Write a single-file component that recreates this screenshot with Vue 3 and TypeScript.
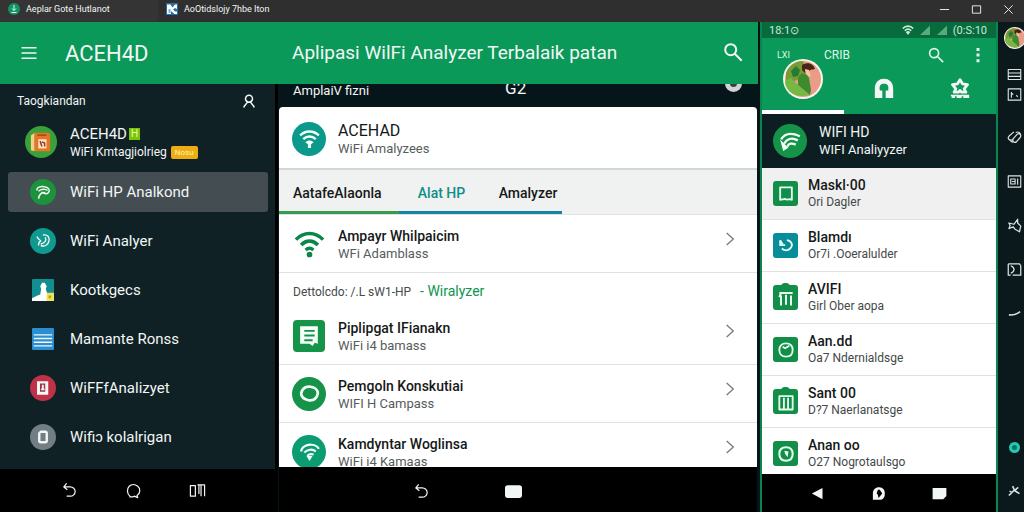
<script setup lang="ts">
import { h, ref } from 'vue'

interface Shape {
  d: string
  fill?: string
  stroke?: string
  width?: number
}

const line = (d: string, width = 2, stroke = 'currentColor'): Shape => ({ d, width, stroke })
const solid = (d: string, fill = 'currentColor'): Shape => ({ d, fill })

const shapes: Record<string, Shape[]> = {
  menu: [line('M2 5h20M2 12h20M2 19h20', 2)],
  search: [line('M15.500 9.500a6 6 0 1 1-12 0a6 6 0 0 1 12 0zM14 14l7.500 7.500', 2.200)],
  dots: [solid('M10 2.500h4v4h-4zM10 10h4v4h-4zM10 17.500h4v4h-4z')],
  person: [line('M18 8a6 6 0 1 1-12 0a6 6 0 0 1 12 0zM3 23c1-3 4-5 6-8.500M21 23c-1-3-4-5-6-8.500', 2.600)],
  chevron: [line('M7 3l10 9-10 9', 2)],
  wifi: [
    line('M1.500 9c6-6.300 15-6.300 21 0', 2.800),
    line('M5.500 13.200c4-4 9-4 13 0', 2.800),
    line('M9 17c2-1.800 4-1.800 6 0', 2.600),
    solid('M14.200 20.500a2.200 2.200 0 1 1-4.400 0a2.200 2.200 0 0 1 4.400 0z'),
  ],
  wifiStatus: [
    line('M1.500 9c6-6.300 15-6.300 21 0', 3.200),
    line('M5.500 13.500c4-4 9-4 13 0', 3.200),
    solid('M7.500 16c3-2.500 6-2.500 9 0L12 22z'),
  ],
  wifiBadge: [
    line('M3 9c5-5 13-5 18 0', 2.300),
    line('M6 12.500c3.500-3.200 8.500-3.200 12 0', 2.300),
    solid('M8 15.500c2.500-2 5.500-2 8 0l-2.500 2V21h-3v-3.500z'),
  ],
  wifiSwirl: [
    line('M4 10c-1-4 5-6 10-5c6 1 8 5 5 8c-2 2-6 1-9-1', 1.900),
    line('M6 11c3-3 9-4 12-1M15 13c-5-1-8 3-9 8', 2),
  ],
  wifiRound: [
    line('M4 12c0-4 5-7 10-6.500c4 .3 6 2 7 4', 2),
    line('M7 13c3-3 8-4 11-1M10 16c2-2 4-2 6-1', 2),
    solid('M9 16h6l-3 5z'),
  ],
  wifiLeaf: [
    line('M3 10c3-5 9-7 18-3M6 14c3-5 8-6 13-3M9 17c1-3 4-4 8-2', 2.200),
    solid('M2 10l3 11 5-3-3-3z'),
  ],
  swirl: [line('M12 4c6-1 9 3 8 8c-1 5-6 8-11 6M4 6c1 4 3 3 5 6c-3 1-3 4-3 6M15 7c2 4 0 8-6 9', 1.800)],
  photo: [
    solid('M0 24v-3l6-3 3-1 1-6-1-3 2-4h3l2 4-1 3 2 6 7 3v4z', '#ffffff'),
    solid('M16 15h8v9h-8z', '#efe25a'),
    solid('M18 18h3v3h-3z', '#b4a62d'),
  ],
  rows: [line('M2 7.500h20M2 11.500h20M2 15.500h20M2 19.500h20', 1.600)],
  book: [
    solid('M1 5l4-3v20l-4-1z', '#f6cf8c'),
    solid('M5 2h15l2 2v18H5z', '#e87524'),
    line('M8 4.500h10', 1.500, '#8d4c20'),
    solid('M9 9h9v10H9z', '#ffe3c9'),
    line('M11 11l2 6M13 12l3 1v4', 1.700, '#983e25'),
  ],
  card: [solid('M4 3h15v18H4z'), solid('M8 6h7v11H8z', '#9d3442'), solid('M10.500 7.500h2.500v5h1v2.500h-4.500v-2.500h1z')],
  zero: [line('M9 5h6a2 2 0 0 1 2 2V17a2 2 0 0 1-2 2H9a2 2 0 0 1-2-2V7z', 3.200)],
  doc: [solid('M3 3h17v17l-3-1-2 3-3-2H3z'), line('M7 7.500h10M7 12h10M7 16.500h8', 1.800, '#15914a')],
  ring: [line('M4 12c1-5 4-7 9-6.500c4 .5 7 3 7 6.500c-1 5-4 7-9 6.500c-4-1-7-3-7-6.500z', 2.600)],
  bookmark: [line('M5 4h14v15c-3-2-5 1-8-1c-2 0-4 1-6 1z', 2.200)],
  refresh: [line('M5 5v6h6M13 5c6 1 8 6 4 10c-3 3-7 3-10 0M8 10l-3-5', 2.200)],
  bin: [line('M4 6h16M6 9v12M12 8v12M18 9v12M6 6l-2 5', 2.400)],
  columns: [line('M4 5h16v16H4zM9.500 7v13M14.500 7v13', 2.200)],
  face: [line('M12 4c6 0 8 3 8 8s-3 8-8 8s-8-3-8-8s3-8 8-8zM8 8l3 2 5-3', 2.200)],
  compass: [line('M12 4c6 0 8 3 8 8s-3 8-8 8s-8-3-8-8s3-8 8-8z', 2.400), solid('M10 8l5 1-1 7-3-4z')],
  headphones: [solid('M1 24V13C1 5 6 1 12 1s11 4 11 12v11h-9v-9h3c1-6-1-8-5-8s-6 2-5 8h3v9z')],
  star: [
    line('M12 2l3 5 6 1-4 5 2 4h-5l-2-2-2 2H5l2-4-4-5 6-1z', 3.400),
    line('M1 21h22M2 23h4M8 23h6M16 23h7', 2),
  ],
  back: [line('M8 2L4 7l5 4M4 7h9a7 6.500 0 0 1 0 13H8', 1.700)],
  home: [line('M7 21h4l2-1 5 2-1-3c5-3 5-10 1-13s-9-3-12 0s-4 10 1 14z', 1.700)],
  recents: [line('M2 5h7v15H2zM12 4h5v16M14 4v13M17 4h5v16', 1.700)],
  tablet: [solid('M4 3h16a4 4 0 0 1 4 4v10a4 4 0 0 1-4 4H4a4 4 0 0 1-4-4V7a4 4 0 0 1 4-4z')],
  triangle: [solid('M20 3v18L3 12z')],
  drop: [solid('M3 22V12C3 6 7 2 13 2s10 5 9 11c0 5-3 9-8 9z'), solid('M11 6h3l4 6-6 7-1-5-2-2z', '#000000')],
  stop: [solid('M1 3h22v13l-5 5H1z')],
  minimize: [line('M2 12h20', 2)],
  maximize: [line('M3 4h18v16H3z', 2)],
  close: [line('M3 3l18 18M21 3L3 21', 2)],
  globe: [line('M12 4v11M8 11l4 4 4-4M7 19h10', 2, '#d5fff0')],
  news: [solid('M2 3h7l4 6 5-6h4v9l-4-2-4 3 4 4h4v5h-5l-7-6v6H2z', '#ffffff'), solid('M5 12h4v8H5z', '#5bb7ec')],
  signal: [solid('M22 3v19H2z', '#57ac7a')],
  stack: [line('M2 4h20v16H2zM2 9.500h20M2 15h20', 1.800)],
  image: [line('M2 3h20v18H2zM7 8v9M7 10l3 2M15 13l2 3', 1.800)],
  link: [line('M11 3L3 10c-3 4 2 8 6 5l7-8c4-3 8 1 5 5l-6 7c-4 2-7-1-5-5M14 4c4-2 8 0 8 5M3 15l6 5', 1.900)],
  panel: [line('M2 3h20v18H2zM6 8h7v8H6zM8 12h4M17 7v10', 1.800)],
  pin: [line('M3 8l8 2 6-8v6l5 5-2 9-7-4-3-4-7 3 2-5z', 2)],
  door: [line('M2 3h18l2 3v15H9M2 3v18h4M6 6c7 3 7 9 0 12', 2)],
  dash: [line('M3 14c7 1 13-1 18-5', 2.400)],
  spark: [line('M3 20l8-8M9 5l3 7 8 5M12 12l6-5M4 13l4 2', 2.600)],
}

const Glyph = (props: { name: string }) =>
  h(
    'svg',
    { viewBox: '0 0 24 24', class: 'glyph', 'aria-hidden': 'true' },
    shapes[props.name].map((s) =>
      h('path', {
        d: s.d,
        fill: s.fill ?? 'none',
        stroke: s.stroke ?? 'none',
        'stroke-width': s.width ?? 0,
        'stroke-linejoin': 'round',
      }),
    ),
  )
Glyph.props = ['name']

const Avatar = () =>
  h('svg', { viewBox: '0 0 40 40', class: 'avatar', 'aria-hidden': 'true' }, [
    h('circle', { cx: 20, cy: 20, r: 20, fill: '#f6f6ee' }),
    h('circle', { cx: 20, cy: 20, r: 18, fill: '#eb9c86' }),
    h('path', { d: 'M3 14A18 18 0 0 1 20 2l4 10-8 8L3 26z', fill: '#7a9a35' }),
    h('path', { d: 'M19 6c6-4 12-1 13 4l-5 1-3 5-5-5z', fill: '#472519' }),
    h('path', { d: 'M22 10l4 1 2 6-5 1z', fill: '#f4c6a0' }),
    h('path', { d: 'M8 12l5-5 4 4-2 6-5 1z', fill: '#247b36' }),
    h('path', { d: 'M2 22l6-3 9 9 10 8C12 40 2 32 2 22z', fill: '#74b942' }),
    h('path', { d: 'M15 20c1-6 8-8 11-1l2 12-1 5-12-10z', fill: '#3d8b2f' }),
  ])

const menuItems = [
  { label: 'WiFi HP Analkond', icon: 'wifiSwirl', tone: 'leaf' },
  { label: 'WiFi Analyer', icon: 'swirl', tone: 'aqua' },
  { label: 'Kootkgecs', icon: 'photo', tone: 'square sea' },
  { label: 'Mamante Ronss', icon: 'rows', tone: 'square sky' },
  { label: 'WiFFfAnalizyet', icon: 'card', tone: 'rose' },
  { label: 'Wifi\u0254 kolalrigan', icon: 'zero', tone: 'slate' },
]
const activeItem = ref(0)

const tabs = ['AatafeAlaonla', 'Alat HP', 'Amalyzer']
const activeTab = ref(1)

const tools = [
  { title: 'Piplipgat IFianakn', sub: 'WiFi i4 bamass', icon: 'doc', tone: 'box' },
  { title: 'Pemgoln Konskutiai', sub: 'WIFI H Campass', icon: 'ring', tone: 'disc' },
  { title: 'Kamdyntar Woglinsa', sub: 'WiFi i4 Kamaas', icon: 'wifiRound', tone: 'disc mint' },
]

const networks = [
  { title: 'Maskl\u00b700', sub: 'Ori Dagler', icon: 'bookmark', tone: '' },
  { title: 'Blamd\u0131', sub: 'Or7i .Ooeralulder', icon: 'refresh', tone: 'cyan' },
  { title: 'AVIFI', sub: 'Girl Ober aopa', icon: 'bin', tone: 'handle' },
  { title: 'Aan.dd', sub: 'Oa7 Ndernialdsge', icon: 'face', tone: '' },
  { title: 'Sant 00', sub: 'D?7 Naerlanatsge', icon: 'columns', tone: 'handle' },
  { title: 'Anan oo', sub: 'O27 Nogrotaulsgo', icon: 'compass', tone: '' },
]

const railTop = ['stack', 'image']
const railMain = ['link', 'panel', 'pin', 'door', 'dash']
</script>

<template>
  <div class="desktop">
    <header class="titlebar">
      <div class="window-tab first"><span class="tab-icon round"><Glyph name="globe" /></span>Aeplar Gote Hutlanot</div>
      <div class="window-tab second"><span class="tab-icon"><Glyph name="news" /></span>AoOtidslojy 7hbe Iton</div>
      <div class="window-actions">
        <button aria-label="Minimize"><Glyph name="minimize" /></button>
        <button aria-label="Maximize"><Glyph name="maximize" /></button>
        <button aria-label="Close"><Glyph name="close" /></button>
      </div>
    </header>

    <div class="stage">
      <section class="workspace">
        <header class="appbar">
          <div class="brand">
            <button aria-label="Menu"><Glyph name="menu" /></button>
            <h1>ACEH4D</h1>
          </div>
          <div class="heading">
            <h2>Aplipasi WilFi Analyzer Terbalaik patan</h2>
            <button aria-label="Search"><Glyph name="search" /></button>
          </div>
        </header>

        <div class="columns">
          <aside class="sidebar">
            <div class="drawer">
              <div class="drawer-head">
                <span>Taogkiandan</span>
                <button aria-label="Account"><Glyph name="person" /></button>
              </div>
              <div class="profile">
                <span class="profile-icon"><Glyph name="book" /></span>
                <div class="profile-text">
                  <div class="profile-name">ACEH4D<span class="chip">H</span></div>
                  <div class="profile-sub">WiFi Kmtagjiolrieg<span class="tag">Nosu</span></div>
                </div>
              </div>
              <nav class="menu">
                <button
                  v-for="(item, i) in menuItems"
                  :key="item.label"
                  :class="{ active: i === activeItem }"
                  @click="activeItem = i"
                >
                  <span class="menu-icon" :class="item.tone"><Glyph :name="item.icon" /></span>{{ item.label }}
                </button>
              </nav>
            </div>
            <div class="softkeys">
              <button aria-label="Back"><Glyph name="back" /></button>
              <button aria-label="Home"><Glyph name="home" /></button>
              <button aria-label="Recents"><Glyph name="recents" /></button>
            </div>
          </aside>

          <main class="content">
            <div class="peek">
              <span>AmplaiV fizni</span>
              <span class="peek-mid">G2</span>
              <span class="peek-dot"></span>
            </div>
            <div class="sheet">
              <div class="card">
                <span class="tool-icon disc teal"><Glyph name="wifiBadge" /></span>
                <div class="row-text">
                  <div class="card-title">ACEHAD</div>
                  <div class="row-sub">WiFi Amalyzees</div>
                </div>
              </div>
              <div class="tabs" role="tablist">
                <button
                  v-for="(tab, i) in tabs"
                  :key="tab"
                  role="tab"
                  :aria-selected="i === activeTab"
                  @click="activeTab = i"
                >
                  {{ tab }}
                </button>
              </div>
              <button class="row">
                <span class="tool-icon plain"><Glyph name="wifi" /></span>
                <span class="row-text">
                  <span class="row-title">Ampayr Whilpaicim</span>
                  <span class="row-sub">WFi Adamblass</span>
                </span>
                <span class="chev"><Glyph name="chevron" /></span>
              </button>
              <p class="subhead">Dettolcdo: /.L sW1-HP <a href="#">- Wiralyzer</a></p>
              <button v-for="tool in tools" :key="tool.title" class="row">
                <span class="tool-icon" :class="tool.tone"><Glyph :name="tool.icon" /></span>
                <span class="row-text">
                  <span class="row-title">{{ tool.title }}</span>
                  <span class="row-sub">{{ tool.sub }}</span>
                </span>
                <span class="chev"><Glyph name="chevron" /></span>
              </button>
            </div>
            <div class="softkeys wide">
              <button aria-label="Back"><Glyph name="back" /></button>
              <button aria-label="Home"><Glyph name="tablet" /></button>
            </div>
          </main>
        </div>
      </section>

      <section class="phone">
        <div class="status">
          <span>18:1&#8857;</span>
          <span class="status-right">
            <Glyph name="wifiStatus" /><Glyph name="signal" /><Glyph name="signal" /><span>(0:S:10</span>
          </span>
        </div>
        <div class="phone-bar">
          <span class="phone-small">LXI</span>
          <span class="phone-name">CRIB</span>
          <button aria-label="Search"><Glyph name="search" /></button>
          <button aria-label="More"><Glyph name="dots" /></button>
        </div>
        <div class="phone-tabs">
          <button class="current" aria-label="Profile"><Avatar /></button>
          <button aria-label="Audio"><Glyph name="headphones" /></button>
          <button aria-label="Favourites"><Glyph name="star" /></button>
        </div>
        <div class="phone-hero">
          <span class="tool-icon disc"><Glyph name="wifiLeaf" /></span>
          <div>
            <div class="hero-title">WIFI HD</div>
            <div class="hero-sub">WIFI Analiyyzer</div>
          </div>
        </div>
        <ul class="networks">
          <li v-for="(net, i) in networks" :key="net.title" :class="{ shaded: i === 0 }">
            <span class="net-icon" :class="net.tone"><Glyph :name="net.icon" /></span>
            <div>
              <div class="net-title">{{ net.title }}</div>
              <div class="net-sub">{{ net.sub }}</div>
            </div>
          </li>
        </ul>
        <div class="softkeys compact">
          <button aria-label="Back"><Glyph name="triangle" /></button>
          <button aria-label="Home"><Glyph name="drop" /></button>
          <button aria-label="Recents"><Glyph name="stop" /></button>
        </div>
      </section>

      <aside class="rail">
        <Avatar />
        <div class="rail-top">
          <button v-for="name in railTop" :key="name" :aria-label="name"><Glyph :name="name" /></button>
        </div>
        <div class="rail-main">
          <button v-for="name in railMain" :key="name" :aria-label="name"><Glyph :name="name" /></button>
        </div>
        <div class="rail-end">
          <button aria-label="Status"><span class="rail-dot"></span></button>
          <button aria-label="Tools"><Glyph name="spark" /></button>
        </div>
      </aside>
    </div>
  </div>
</template>

<style>
html,
body {
  margin: 0;
  background: #000;
}
</style>

<style scoped>
.desktop {
  display: flex;
  flex-direction: column;
  height: 100vh;
  overflow: hidden;
  font-family: Roboto, 'Liberation Sans', sans-serif;
  color: #f2f6f5;
  background: #071012;
}
* {
  box-sizing: border-box;
}
button {
  display: flex;
  align-items: center;
  justify-content: center;
  padding: 0;
  border: 0;
  background: none;
  color: inherit;
  font: inherit;
  text-align: left;
}
h1,
h2,
p,
ul {
  margin: 0;
  padding: 0;
  font-weight: 400;
  list-style: none;
}
.glyph {
  display: block;
  flex: none;
  width: 18px;
  height: 18px;
}

.titlebar {
  display: flex;
  flex: none;
  height: 22px;
  background: #2f2f2f;
  font-size: 9px;
}
.window-tab {
  display: flex;
  align-items: center;
  gap: 6px;
  padding: 0 0 4px 8px;
  white-space: nowrap;
}
.window-tab.first {
  width: 158px;
  background: #343434;
}
.window-tab.second {
  width: 140px;
}
.tab-icon {
  background: #2a6d9f;
}
.tab-icon.round {
  border-radius: 50%;
  background: #179164;
}
.tab-icon .glyph {
  width: 12px;
  height: 12px;
}
.window-actions {
  display: flex;
  margin-left: auto;
  padding-bottom: 4px;
}
.window-actions button {
  width: 32px;
}
.window-actions .glyph {
  width: 11px;
  height: 11px;
}

.stage {
  display: flex;
  flex: 1;
  min-height: 0;
}
.workspace {
  display: flex;
  flex: 1;
  flex-direction: column;
  min-width: 0;
}
.appbar,
.columns {
  display: grid;
  grid-template-columns: 275px 1fr;
}
.appbar {
  flex: none;
  height: 62px;
  margin-right: 2px;
  background: #0b9959;
}
.brand,
.heading {
  display: flex;
  align-items: center;
}
.brand {
  gap: 27px;
  padding-left: 20px;
}
h1 {
  font-size: 22px;
}
h2 {
  font-size: 19px;
}
.heading {
  justify-content: space-between;
  padding: 0 14px 2px 17px;
  white-space: nowrap;
}
.heading .glyph {
  width: 22px;
  height: 22px;
}
.columns {
  flex: 1;
  min-height: 0;
}

.sidebar,
.content {
  display: flex;
  flex-direction: column;
  min-width: 0;
  min-height: 0;
}
.drawer {
  flex: 1;
  min-height: 0;
  overflow: hidden;
  background: #102125;
}
.drawer-head {
  display: flex;
  align-items: center;
  justify-content: space-between;
  height: 34px;
  padding: 0 19px 0 17px;
  font-size: 12px;
}
.drawer-head .glyph {
  width: 14px;
  height: 14px;
}
.profile {
  display: flex;
  align-items: center;
  gap: 13px;
  height: 48px;
  padding-left: 25px;
}
.profile-icon {
  display: grid;
  place-items: center;
  width: 32px;
  height: 32px;
  border-radius: 50%;
  background: #38a139;
}
.profile-icon .glyph {
  width: 22px;
  height: 22px;
}
.profile-text {
  padding-top: 2px;
}
.profile-name,
.profile-sub {
  display: flex;
  align-items: center;
  line-height: 18px;
}
.profile-name {
  font-size: 15px;
}
.profile-sub {
  font-size: 12px;
}
.chip {
  margin-left: 2px;
  padding: 0 2px;
  background: #7cc30c;
  color: #e8ff9c;
  font-size: 10px;
  line-height: 12px;
}
.tag {
  margin-left: 4px;
  padding: 0 4px;
  border-radius: 2px;
  background: #eeae13;
  color: #fff0b1;
  font-size: 8px;
  line-height: 13px;
}
.menu {
  display: flex;
  flex-direction: column;
  gap: 9px;
  padding: 6px 7px 0 8px;
}
.menu button {
  justify-content: flex-start;
  gap: 14px;
  height: 40px;
  padding-left: 22px;
  border-radius: 3px;
  font-size: 15px;
}
.menu .active {
  background: #444e52;
}
.menu-icon {
  display: grid;
  place-items: center;
  width: 26px;
  height: 26px;
  border-radius: 50%;
}
.menu-icon.square {
  width: 22px;
  height: 22px;
  margin: 0 2px;
  border-radius: 1px;
}
.menu-icon.square .glyph {
  width: 22px;
  height: 22px;
}
.leaf {
  background: #1c923d;
}
.aqua {
  background: #0f9a90;
}
.sea {
  background: #128e91;
}
.sky {
  background: #298fd2;
}
.rose {
  background: #be3147;
}
.slate {
  background: #727d84;
}

.softkeys {
  display: flex;
  flex: none;
  height: 43px;
  padding-left: 37px;
  background: #000;
}
.softkeys button {
  width: 64px;
}
.softkeys .glyph {
  width: 17px;
  height: 17px;
}
.softkeys.wide {
  height: 45px;
  padding-top: 4px;
  padding-left: 96px;
}
.softkeys.wide button {
  width: 92px;
}
.softkeys.compact {
  height: 38px;
  padding-left: 25px;
}
.softkeys.compact button {
  width: 61px;
}
.softkeys.compact .glyph {
  width: 15px;
  height: 15px;
}

.content {
  padding: 0 3px 0 4px;
  background: #061519;
  box-shadow: inset 3px 0 #000;
}
.peek {
  display: flex;
  flex: none;
  align-items: flex-start;
  height: 23px;
  padding: 0 15px 0 14px;
  overflow: hidden;
  font-size: 13px;
  line-height: 14px;
}
.peek-mid {
  margin-left: 136px;
  font-size: 17px;
  line-height: 8px;
}
.peek-dot {
  width: 17px;
  height: 17px;
  margin: -9px 0 0 auto;
  border: 5px solid #d0d3d3;
  border-radius: 50%;
  background: #334044;
}
.sheet {
  flex: 1;
  min-height: 0;
  overflow: hidden;
  border-radius: 4px 4px 0 0;
  background: #fff;
  color: #151918;
}
.card,
.row {
  display: flex;
  align-items: center;
  gap: 12px;
  width: 100%;
  padding-left: 13px;
}
.card {
  height: 63px;
  padding-top: 2px;
  border-bottom: 2px solid #d4d6d6;
}
.row {
  height: 58px;
  border-bottom: 1px solid #dfe2e1;
}
.tool-icon {
  display: grid;
  flex: none;
  place-items: center;
  width: 34px;
  height: 34px;
  border-radius: 50%;
  background: #149349;
  color: #f3fff8;
}
.tool-icon .glyph {
  width: 25px;
  height: 25px;
}
.tool-icon.box {
  width: 32px;
  height: 32px;
  margin: 0 1px;
  border-radius: 4px;
}
.tool-icon.teal {
  background: #0b998b;
}
.tool-icon.mint {
  background: #0c9c72;
}
.tool-icon.plain {
  background: none;
  color: #098649;
}
.tool-icon.plain .glyph {
  width: 31px;
  height: 31px;
}
.row-text {
  flex: 1;
  padding-top: 3px;
}
.card-title,
.row-title,
.row-sub {
  display: block;
  line-height: 18px;
}
.card-title {
  font-size: 16px;
}
.row-title {
  font-size: 14px;
  font-weight: 500;
}
.row-sub {
  color: #565c5b;
  font-size: 13px;
}
.chev {
  margin-right: 19px;
  margin-bottom: 10px;
  color: #777d7c;
}
.chev .glyph {
  width: 16px;
  height: 16px;
}
.tabs {
  display: flex;
  height: 45px;
  border-bottom: 1px solid #e0e2e2;
  background: #f0f1f1;
}
.tabs button {
  width: 85px;
  padding-top: 4px;
  border-bottom: 3px solid #1685a5;
  font-size: 14px;
  font-weight: 500;
}
.tabs button:first-child {
  width: 120px;
  justify-content: flex-start;
  padding-left: 14px;
  border-color: #399a52;
}
.tabs button:last-child {
  width: 78px;
  padding-left: 10px;
}
.tabs button[aria-selected='true'] {
  color: #0c8f86;
}
.subhead {
  height: 34px;
  padding-left: 14px;
  color: #454b4a;
  font-size: 12px;
  line-height: 36px;
}
.subhead a {
  margin-left: 6px;
  color: #0d9650;
  text-decoration: none;
  font-size: 14px;
}

.phone {
  display: flex;
  flex: none;
  flex-direction: column;
  width: 238px;
  border: solid #0a8550;
  border-width: 0 2px;
  background: #0b9959;
}
.status {
  display: flex;
  flex: none;
  align-items: center;
  justify-content: space-between;
  height: 16px;
  padding: 0 9px 0 7px;
  background: #076b3d;
  color: #c7ecd7;
  font-size: 11px;
}
.status-right {
  display: flex;
  align-items: center;
  gap: 5px;
}
.status .glyph {
  width: 12px;
  height: 12px;
}
.phone-bar {
  display: flex;
  flex: none;
  align-items: center;
  height: 34px;
  padding-right: 7px;
  padding-left: 15px;
  color: #dff7e9;
  font-size: 12px;
}
.phone-small {
  width: 47px;
  font-size: 9px;
}
.phone-bar button {
  width: 22px;
}
.phone-bar button:first-of-type {
  margin-right: 20px;
  margin-left: auto;
}
.phone-tabs {
  display: grid;
  flex: none;
  grid-template-columns: 82px 80px 1fr;
  height: 55px;
  margin-top: -13px;
}
.phone-tabs button {
  align-items: flex-start;
  padding-top: 19px;
  border-bottom: 4px solid transparent;
}
.phone-tabs .current {
  padding-top: 0;
  border-color: #fff;
}
.phone-tabs .glyph {
  width: 20px;
  height: 20px;
}
.avatar {
  flex: none;
  width: 40px;
  height: 40px;
}
.phone-hero {
  display: flex;
  flex: none;
  align-items: center;
  gap: 12px;
  height: 54px;
  padding-left: 11px;
  background: #0d1e23;
  line-height: 18px;
}
.hero-title {
  font-size: 14px;
}
.hero-sub {
  font-size: 13px;
}
.networks {
  flex: 1;
  min-height: 0;
  overflow: hidden;
  background: #fff;
  color: #151918;
}
.networks li {
  display: flex;
  align-items: center;
  gap: 10px;
  height: 52px;
  padding-left: 11px;
  border-bottom: 1px solid #dfe2e1;
  line-height: 17px;
}
.networks .shaded {
  background: #f0f0f0;
}
.net-icon {
  position: relative;
  display: grid;
  place-items: center;
  width: 25px;
  height: 25px;
  border-radius: 3px;
  background: #128e49;
  color: #e6fff0;
}
.net-icon .glyph {
  width: 20px;
  height: 20px;
}
.net-icon.cyan {
  background: #078d9a;
}
.net-icon.handle::before {
  content: '';
  position: absolute;
  top: -2px;
  left: 8px;
  width: 9px;
  height: 4px;
  border-radius: 4px 4px 0 0;
  background: #128e49;
}
.net-title {
  font-size: 14px;
  font-weight: 500;
}
.net-sub {
  color: #434948;
  font-size: 12px;
}

.rail {
  display: flex;
  flex: none;
  flex-direction: column;
  width: 26px;
  padding: 5px 0 0 6px;
  background: #0b181c;
  color: #dbe3e2;
}
.rail .avatar {
  width: 22px;
  height: 22px;
}
.rail .glyph {
  width: 15px;
  height: 15px;
}
.rail-top {
  padding: 15px 0 11px;
}
.rail-top button {
  height: 20px;
}
.rail-main button {
  height: 44px;
}
.rail-end {
  margin-top: auto;
}
.rail-end button {
  height: 43px;
}
.rail button {
  width: 20px;
}
.rail-dot {
  width: 11px;
  height: 11px;
  border: 3px solid #23c9ad;
  border-radius: 50%;
  background: #0c7467;
}
</style>
